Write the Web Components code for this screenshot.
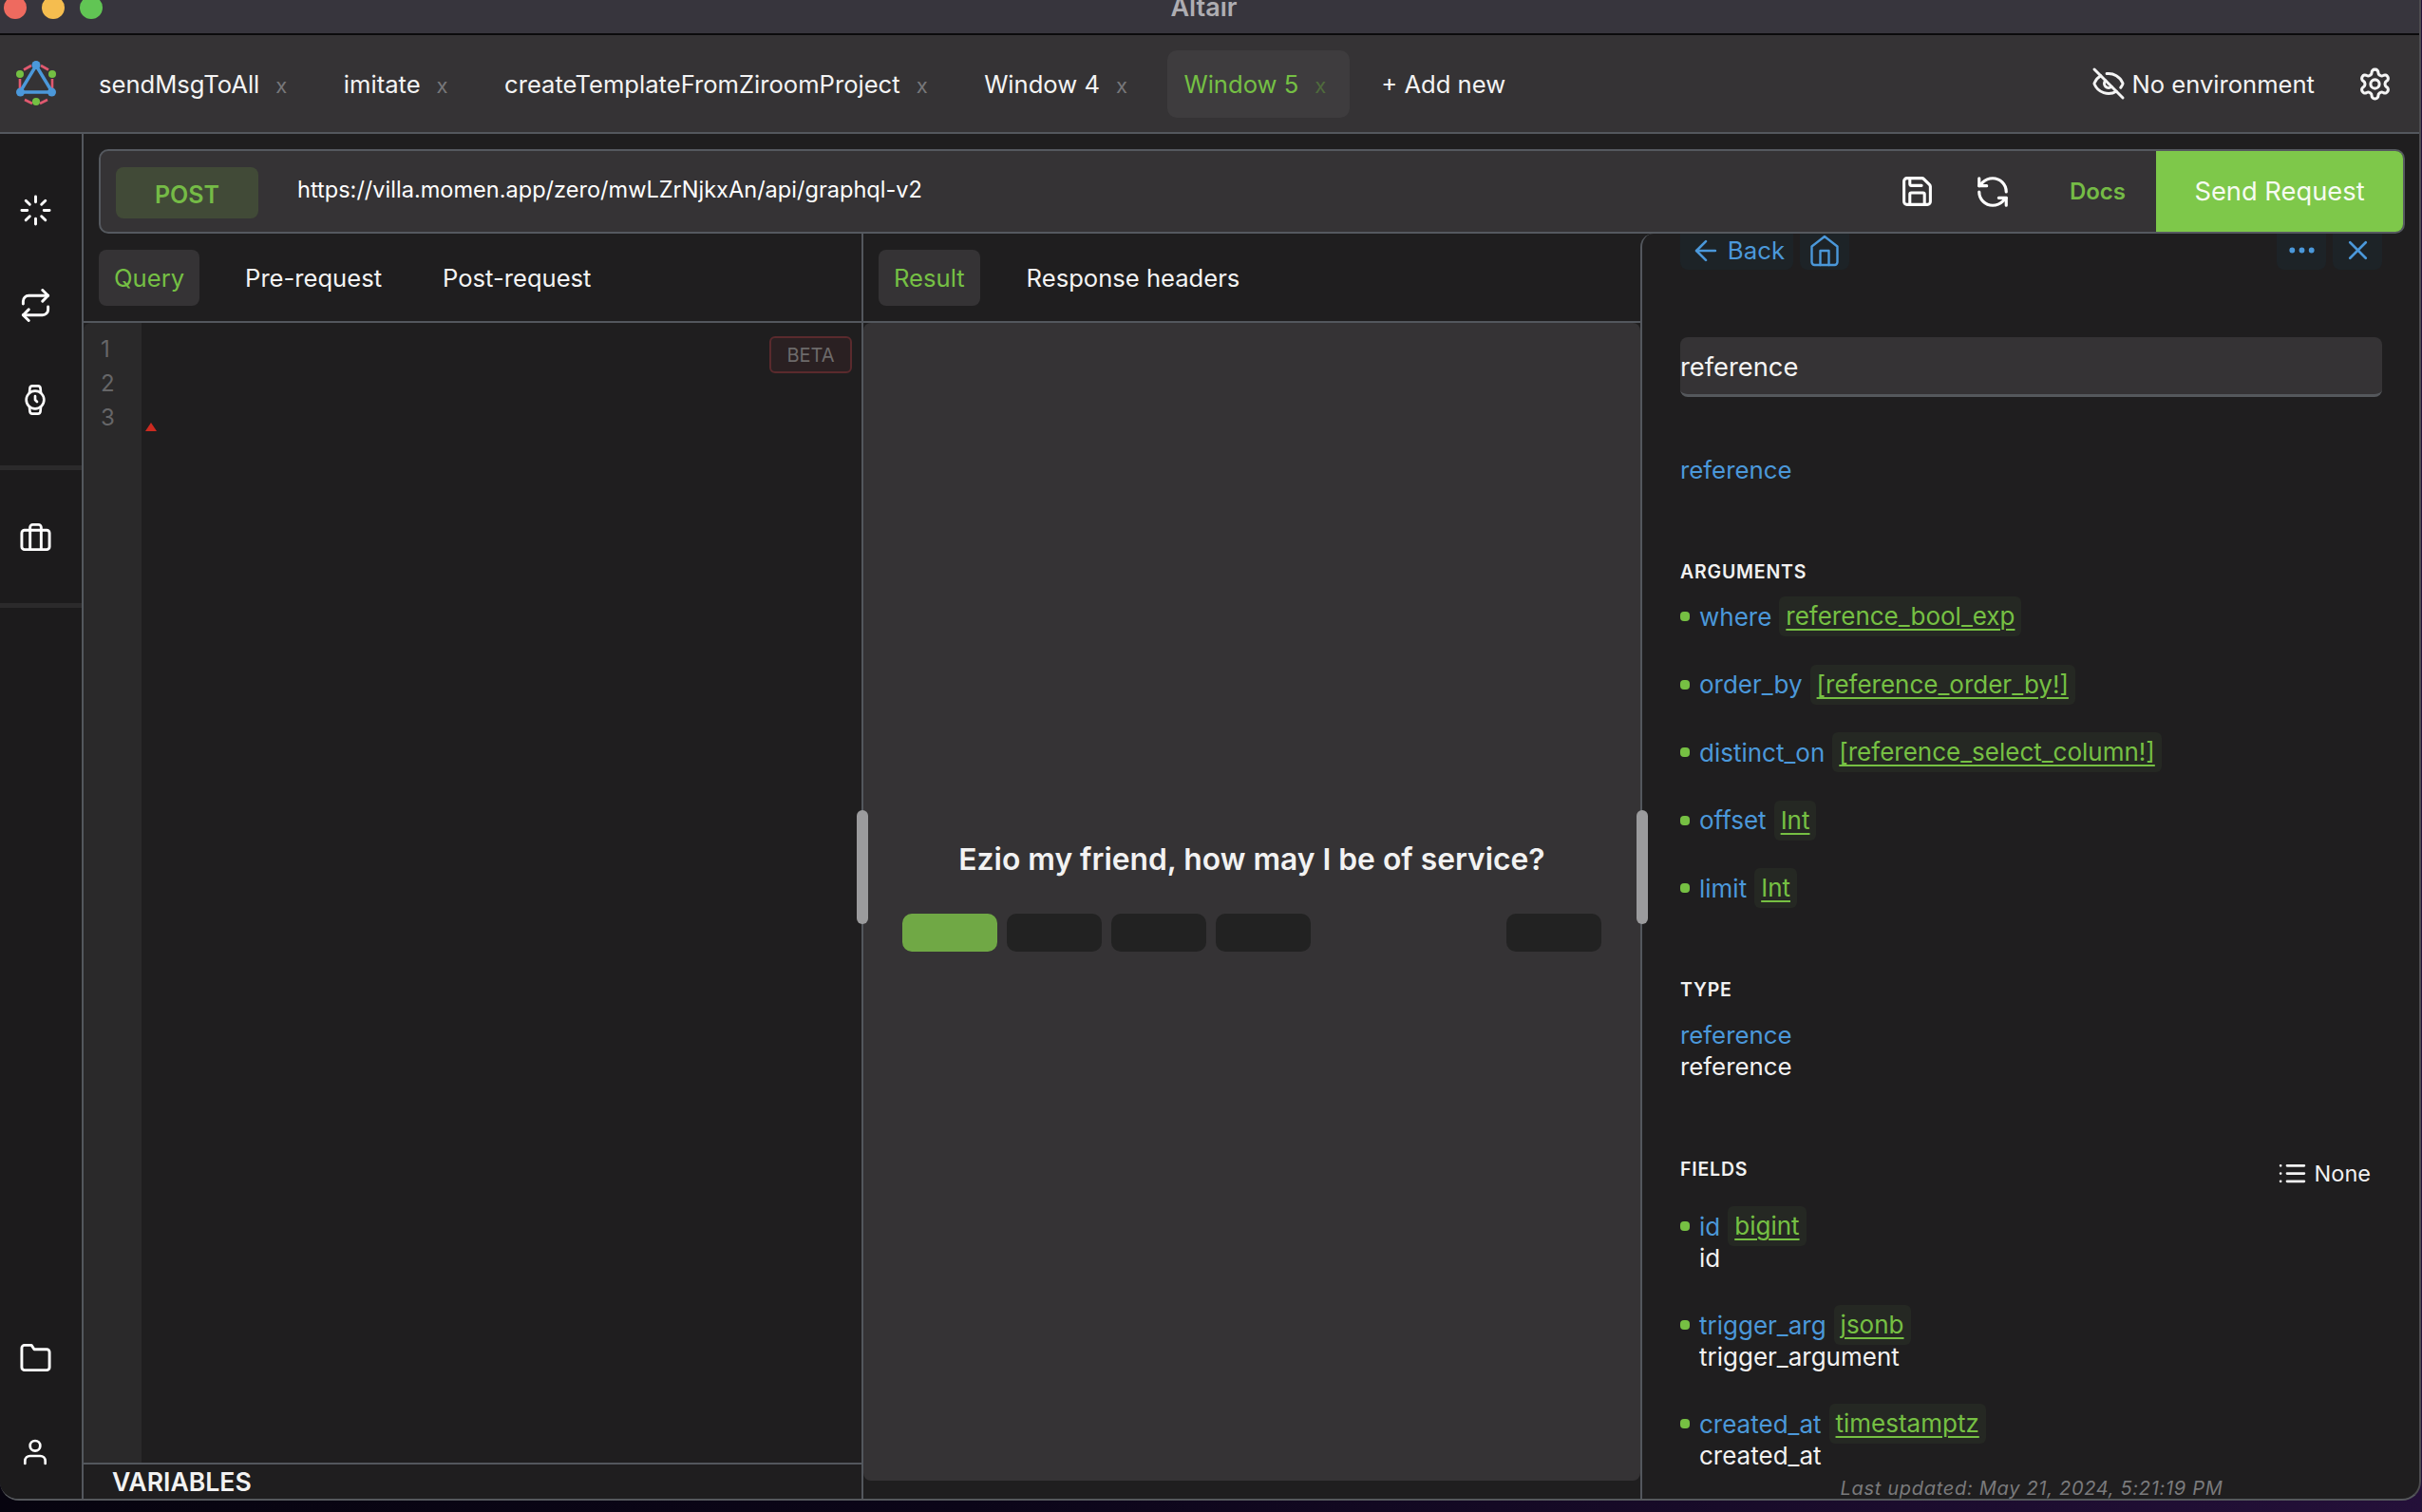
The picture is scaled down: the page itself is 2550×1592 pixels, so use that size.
<!DOCTYPE html>
<html lang="en">
<head>
<meta charset="utf-8">
<title>Altair</title>
<style>
  html, body { margin: 0; height: 100%; overflow: hidden; }
  body {
    background: linear-gradient(90deg, #07040f, #0b0518 40%, #241039);
    font-family: Inter, "Noto Sans", sans-serif;
    color: #f2f2f2;
  }
</style>
</head>
<body>
<app-window>
  <title-bar slot="top">Altair</title-bar>
  <tab-bar slot="top"></tab-bar>
  <side-bar slot="side"></side-bar>
  <url-bar slot="main"></url-bar>
  <panel-row slot="main">
    <query-panel></query-panel>
    <result-panel></result-panel>
    <docs-panel></docs-panel>
  </panel-row>
</app-window>

<script>
const ICONS = {
  loader: '<path d="M12 2v4M12 18v4M4.93 4.93l2.83 2.83M16.24 16.24l2.83 2.83M2 12h4M18 12h4M4.93 19.07l2.83-2.83M16.24 7.76l2.83-2.83"/>',
  repeat: '<path d="M17 1l4 4-4 4"/><path d="M3 11V9a4 4 0 0 1 4-4h14"/><path d="M7 23l-4-4 4-4"/><path d="M21 13v2a4 4 0 0 1-4 4H3"/>',
  watch: '<circle cx="12" cy="12" r="7"/><path d="M12 9v3l1.5 1.5"/><path d="M16.51 17.35l-.35 3.83a2 2 0 0 1-2 1.82H9.83a2 2 0 0 1-2-1.82l-.35-3.83m.01-10.7l.35-3.83A2 2 0 0 1 9.83 1h4.35a2 2 0 0 1 2 1.82l.35 3.83"/>',
  briefcase: '<rect x="2" y="7" width="20" height="14" rx="2"/><path d="M16 21V5a2 2 0 0 0-2-2h-4a2 2 0 0 0-2 2v16"/>',
  folder: '<path d="M22 19a2 2 0 0 1-2 2H4a2 2 0 0 1-2-2V5a2 2 0 0 1 2-2h5l2 3h9a2 2 0 0 1 2 2z"/>',
  user: '<path d="M20 21v-2a4 4 0 0 0-4-4H8a4 4 0 0 0-4 4v2"/><circle cx="12" cy="7" r="4"/>',
  save: '<path d="M15.2 3a2 2 0 0 1 1.4.6l3.8 3.8a2 2 0 0 1 .6 1.4V19a2 2 0 0 1-2 2H5a2 2 0 0 1-2-2V5a2 2 0 0 1 2-2z"/><path d="M17 21v-7a1 1 0 0 0-1-1H8a1 1 0 0 0-1 1v7"/><path d="M7 3v4a1 1 0 0 0 1 1h7"/>',
  refresh: '<path d="M21 12a9 9 0 0 0-9-9 9.75 9.75 0 0 0-6.74 2.74L3 8"/><path d="M3 3v5h5"/><path d="M3 12a9 9 0 0 0 9 9 9.75 9.75 0 0 0 6.74-2.74L21 16"/><path d="M16 16h5v5"/>',
  eyeoff: '<path d="M10.733 5.076a10.744 10.744 0 0 1 11.205 6.575 1 1 0 0 1 0 .696 10.747 10.747 0 0 1-1.444 2.49"/><path d="M14.084 14.158a3 3 0 0 1-4.242-4.242"/><path d="M17.479 17.499a10.75 10.75 0 0 1-15.417-5.151 1 1 0 0 1 0-.696 10.75 10.75 0 0 1 4.446-5.143"/><path d="M2 2l20 20"/>',
  gear: '<path d="M12.22 2h-.44a2 2 0 0 0-2 2v.18a2 2 0 0 1-1 1.73l-.43.25a2 2 0 0 1-2 0l-.15-.08a2 2 0 0 0-2.73.73l-.22.38a2 2 0 0 0 .73 2.73l.15.1a2 2 0 0 1 1 1.72v.51a2 2 0 0 1-1 1.74l-.15.09a2 2 0 0 0-.73 2.73l.22.38a2 2 0 0 0 2.73.73l.15-.08a2 2 0 0 1 2 0l.43.25a2 2 0 0 1 1 1.73V20a2 2 0 0 0 2 2h.44a2 2 0 0 0 2-2v-.18a2 2 0 0 1 1-1.73l.43-.25a2 2 0 0 1 2 0l.15.08a2 2 0 0 0 2.73-.73l.22-.39a2 2 0 0 0-.73-2.73l-.15-.08a2 2 0 0 1-1-1.74v-.5a2 2 0 0 1 1-1.74l.15-.09a2 2 0 0 0 .73-2.73l-.22-.38a2 2 0 0 0-2.73-.73l-.15.08a2 2 0 0 1-2 0l-.43-.25a2 2 0 0 1-1-1.73V4a2 2 0 0 0-2-2z"/><circle cx="12" cy="12" r="3"/>',
  back: '<path d="M19 12H5"/><path d="M12 19l-7-7 7-7"/>',
  home: '<path d="M3 9l9-7 9 7v11a2 2 0 0 1-2 2H5a2 2 0 0 1-2-2z"/><path d="M9 22V12h6v10"/>',
  more: '<circle cx="5" cy="12" r="1"/><circle cx="12" cy="12" r="1"/><circle cx="19" cy="12" r="1"/>',
  close: '<path d="M18 6L6 18"/><path d="M6 6l12 12"/>',
  list: '<path d="M8 6h13M8 12h13M8 18h13M3 6h.01M3 12h.01M3 18h.01"/>'
};

class UiIcon extends HTMLElement {
  connectedCallback() {
    const size = this.getAttribute("size") || 35;
    const stroke = this.getAttribute("stroke") || 2;
    this.attachShadow({ mode: "open" });
    this.shadowRoot.innerHTML = `
      <style>:host { display: inline-flex; flex: none; color: inherit; } svg { display: block; }</style>
      <svg width="${size}" height="${size}" viewBox="0 0 24 24" fill="none" stroke="currentColor"
        stroke-width="${stroke}" stroke-linecap="round" stroke-linejoin="round">${ICONS[this.getAttribute("name")]}</svg>`;
  }
}
customElements.define("ui-icon", UiIcon);

// small helper, each element only differs by its template
function component(tag, html) {
  const template = document.createElement("template");
  template.innerHTML = html;
  customElements.define(tag, class extends HTMLElement {
    constructor() {
      super();
      this.attachShadow({ mode: "open" });
      this.shadowRoot.appendChild(template.content.cloneNode(true));
    }
  });
}

component("app-window", `
<style>
  :host { display: flex; flex-direction: column; width: 2549px; height: 1580px; background: #1f1e1f;
    border-radius: 0 0 20px 20px; overflow: hidden; box-sizing: border-box;
    border-right: 2px solid #4c4c4e; border-bottom: 2px solid #55585c; }
  .body { flex: 1; min-height: 0; display: flex; }
  .main { flex: 1; min-width: 0; display: flex; flex-direction: column; }
</style>
<slot name="top"></slot>
<div class="body">
  <slot name="side"></slot>
  <div class="main"><slot name="main"></slot></div>
</div>`);

component("title-bar", `
<style>
  :host { display: grid; grid-template-columns: 1fr auto 1fr; height: 37px; box-sizing: border-box; background: #37353d;
    border-bottom: 2px solid #0b0b0c; overflow: hidden; padding-right: 12px; }
  .lights { display: flex; gap: 16px; padding-left: 4px; align-items: flex-end; height: 20px; }
  .lights i { display: block; flex: none; width: 24px; height: 24px; border-radius: 50%; }
  .title { font: 600 27px/26px Inter, sans-serif; color: #aeadb2; margin-top: -5px; }
</style>
<div class="lights"><i style="background:#ee6a5f"></i><i style="background:#f5bd4f"></i><i style="background:#61c554"></i></div>
<div class="title"><slot></slot></div>`);

component("tab-item", `
<style>
  :host { display: flex; align-items: center; gap: 17px; height: 71px; padding: 0 25px 0 17px; border-radius: 10px;
    font-size: 25.6px; color: #f4f4f4; white-space: nowrap; }
  :host([active]) { background: #3e3c3e; color: #75c044; }
  .x { font-size: 22px; color: #77777a; position: relative; top: 2px; }
  :host([active]) .x { color: #4f6b3c; }
</style>
<slot></slot><span class="x">x</span>`);

component("tab-bar", `
<style>
  :host { display: flex; align-items: center; height: 104px; box-sizing: border-box; background: #353335;
    border-bottom: 2px solid #53575d; padding: 0 28px 0 17px; }
  .logo { flex: none; margin-right: 28px; display: block; }
  .tabs { display: flex; gap: 17.5px; }
  .add { font-size: 25.6px; padding-left: 33px; color: #f4f4f4; line-height: 71px; }
  .right { margin-left: auto; display: flex; align-items: center; font-size: 25.6px; color: #f4f4f4; }
  .env { margin-left: 6px; margin-right: 45px; }
</style>
<svg class="logo" width="42" height="48" viewBox="0 0 42 48" fill="none">
  <g stroke="#e0596f" stroke-width="2.6">
    <path d="M8 9.5L16 5M26 5l8 4.5M38 19v14M33 41l-8 4M17 45l-8-4M4 33V19"/>
  </g>
  <path d="M21 5L4 33h34z" stroke="#4b98da" stroke-width="3.4" stroke-linejoin="round"/>
  <g fill="#4b98da"><circle cx="21" cy="4.5" r="4.5"/><circle cx="4.5" cy="33" r="4.5"/><circle cx="37.5" cy="33" r="4.5"/></g>
  <g fill="#74c043"><circle cx="4" cy="14" r="4"/><circle cx="38" cy="14" r="4"/><circle cx="21" cy="43" r="4"/></g>
</svg>
<div class="tabs">
  <tab-item>sendMsgToAll</tab-item>
  <tab-item>imitate</tab-item>
  <tab-item>createTemplateFromZiroomProject</tab-item>
  <tab-item>Window 4</tab-item>
  <tab-item active>Window 5</tab-item>
</div>
<div class="add">+ Add new</div>
<div class="right">
  <ui-icon name="eyeoff" size="36"></ui-icon><span class="env">No environment</span><ui-icon name="gear" size="37"></ui-icon>
</div>`);

component("side-bar", `
<style>
  :host { display: flex; flex-direction: column; flex: none; width: 88px; box-sizing: border-box; background: #1c1b1c;
    border-right: 2px solid #53575d; padding-top: 30px; color: #fff; }
  .item { height: 100px; box-sizing: border-box; padding-right: 12px; display: flex; align-items: center; justify-content: center; }
  .sep { height: 5px; background: #2b2a2b; margin: 19px 0 20px; }
  .sep + .item + .sep { margin-top: 20px; }
  .bottom { margin-top: auto; }
  .bottom .item { padding-top: 2px; }
</style>
<div class="item"><ui-icon name="loader"></ui-icon></div>
<div class="item"><ui-icon name="repeat"></ui-icon></div>
<div class="item"><ui-icon name="watch" size="32"></ui-icon></div>
<div class="sep"></div>
<div class="item"><ui-icon name="briefcase"></ui-icon></div>
<div class="sep"></div>
<div class="bottom">
  <div class="item"><ui-icon name="folder"></ui-icon></div>
  <div class="item"><ui-icon name="user" size="32"></ui-icon></div>
</div>`);

component("url-bar", `
<style>
  :host { display: flex; align-items: stretch; flex: none; height: 89px; box-sizing: border-box; margin: 16px 15px 0 16px;
    background: #353335; border: 2px solid #55595f; border-radius: 10px; overflow: hidden; padding-left: 16px; color: #fff; }
  .method { align-self: center; width: 150px; height: 54px; margin-top: 3px; border-radius: 8px; background: #414a37; color: #75bb46;
    font-weight: 600; font-size: 25px; padding-top: 4px; box-sizing: border-box; display: flex; align-items: center; justify-content: center; }
  .url { align-self: center; margin-left: 41px; font-size: 23.55px; margin-top: -4px; flex: 1; }
  .tools { display: flex; align-items: center; gap: 42px; margin-right: 62px; }
  .docs { align-self: center; color: #75bb46; font-weight: 600; font-size: 24px; margin-right: 32px; }
  .send { width: 260px; background: #7ec84a; color: #f6fbf1; font-size: 27.3px; display: flex; align-items: center; justify-content: center; }
</style>
<div class="method">POST</div>
<div class="url">https://villa.momen.app/zero/mwLZrNjkxAn/api/graphql-v2</div>
<div class="tools"><ui-icon name="save" size="37"></ui-icon><ui-icon name="refresh" size="38"></ui-icon></div>
<div class="docs">Docs</div>
<div class="send">Send Request</div>`);

component("panel-row", `
<style>
  :host { display: grid; grid-template-columns: 819px 820px 1fr; flex: 1; min-height: 0; }
</style>
<slot></slot>`);

component("sub-tabs", `
<style>
  :host { display: flex; gap: 33px; flex: none; height: 94px; box-sizing: border-box; padding: 17px 16px 16px;
    border-bottom: 2px solid #53575d; }
</style>
<slot></slot>`);

component("sub-tab", `
<style>
  :host { display: flex; align-items: center; height: 59px; padding: 0 16px; border-radius: 8px; font-size: 25.6px; color: #f4f4f4; }
  :host([active]) { background: #353335; color: #75c044; }
</style>
<slot></slot>`);

component("drag-handle", `
<style>
  :host { position: absolute; left: -7px; top: 50%; width: 12px; height: 120px; margin-top: -59px; border-radius: 6px;
    background: #9b9b9d; z-index: 2; }
</style>`);

component("query-panel", `
<style>
  :host { display: flex; flex-direction: column; min-height: 0; }
  .editor { flex: 1; min-height: 0; display: flex; position: relative; }
  .gutter { width: 61px; flex: none; box-sizing: border-box; background: #2a292a; padding: 10px 0 0 18px; border-radius: 8px 0 0 0;
    font-size: 24px; line-height: 36px; color: #666668; }
  .code { flex: 1; padding: 105px 0 0 4px; }
  .marker { width: 0; height: 0; border: solid transparent; border-width: 0 6px 9px; border-bottom-color: #cc2a20; }
  .beta { position: absolute; top: 14px; right: 10px; width: 87px; height: 39px; box-sizing: border-box; border: 2px solid #5a2a2d;
    border-radius: 6px; background: #2a2022; color: #6d6a6a; font-size: 20px; display: flex; align-items: center; justify-content: center; }
  .vars { flex: none; height: 38px; box-sizing: border-box; border-top: 2px solid #53575d; padding-left: 30px;
    font-weight: 600; font-size: 26.6px; line-height: 36px; color: #f2f2f2; }
</style>
<sub-tabs style="gap:32px"><sub-tab active>Query</sub-tab><sub-tab>Pre-request</sub-tab><sub-tab>Post-request</sub-tab></sub-tabs>
<div class="editor">
  <div class="gutter">1<br>2<br>3</div>
  <div class="code"><div class="marker"></div></div>
  <div class="beta">BETA</div>
</div>
<div class="vars">VARIABLES</div>`);

component("result-panel", `
<style>
  :host { display: flex; flex-direction: column; min-height: 0; position: relative; border-left: 2px solid #53575d; }
  .body { flex: 1; min-height: 0; margin-bottom: 19px; background: #353335; border-radius: 8px; display: flex; flex-direction: column;
    justify-content: center; padding: 0 41px 18px; }
  h2 { margin: 0 0 31px; font-size: 31.8px; font-weight: 600; text-align: center; line-height: 52px; color: #f2f2f2; }
  .btns { display: flex; gap: 10px; }
  .btns i { display: block; width: 100px; height: 40px; border-radius: 10px; background: #222222; }
  .btns i:first-child { background: #70a845; }
  .btns i:last-child { margin-left: auto; }
</style>
<drag-handle></drag-handle>
<sub-tabs><sub-tab active>Result</sub-tab><sub-tab>Response headers</sub-tab></sub-tabs>
<div class="body">
  <h2>Ezio my friend, how may I be of service?</h2>
  <div class="btns"><i></i><i></i><i></i><i></i><i></i></div>
</div>`);

class DocRow extends HTMLElement {
  connectedCallback() {
    const desc = this.getAttribute("desc");
    this.attachShadow({ mode: "open" });
    this.shadowRoot.innerHTML = `
    <style>
      :host { display: block; font-size: 26px; line-height: 33px; }
      .head { display: flex; align-items: center; height: 42px; }
      .dot { width: 10px; height: 10px; border-radius: 4px; background: #76c043; margin-right: 10px; flex: none; }
      .name { color: #4b98da; margin-right: 8px; }
      .type { height: 42px; line-height: 42px; padding: 0 7px; border-radius: 6px; background: #252823; color: #76c043;
        text-decoration: underline; text-underline-offset: 4px; text-decoration-thickness: 2px; }
      .desc { padding-left: 20px; margin-top: -4px; color: #f2f2f2; }
    </style>
    <div class="head"><span class="dot"></span><span class="name">${this.getAttribute("name")}</span><span class="type">${this.getAttribute("type")}</span></div>
    ${desc ? `<div class="desc">${desc}</div>` : ""}`;
  }
}
customElements.define("doc-row", DocRow);

component("docs-panel", `
<style>
  :host { display: flex; flex-direction: column; min-height: 0; position: relative; border-left: 2px solid #53575d;
    border-radius: 14px 0 0 0; font-size: 25.8px; line-height: 33px; }
  .scroll { flex: 1; min-height: 0; overflow: hidden; padding: 0 39px 0 40px; }
  .nav { display: flex; gap: 7px; color: #4b98da; height: 38px; }
  .btn { display: flex; align-items: center; justify-content: center; height: 38px; padding-bottom: 3px; box-sizing: border-box; width: 52px; background: #1d2327; border-radius: 0 0 8px 8px; overflow: hidden; }
  .btn.back { width: 119px; gap: 6px; font-size: 25.8px; padding-left: 1px; }
  .spacer { flex: 1; }
  .search { margin-top: 71px; height: 63px; box-sizing: border-box; background: #353335; border-bottom: 3px solid #55585c; border-radius: 8px;
    font-size: 27.3px; line-height: 63px; color: #f4f4f4; }
  .blue { color: #4b98da; }
  .white { color: #f2f2f2; }
  .t { font-weight: 600; font-size: 19.5px; line-height: 24px; letter-spacing: .8px; color: #f2f2f2; }
  .args { display: flex; flex-direction: column; gap: 29.5px; margin-top: 14px; }
  .fields { display: flex; flex-direction: column; gap: 33px; margin-top: 18px; }
  .fhead { display: flex; justify-content: space-between; align-items: flex-start; margin-top: 80px; height: 33px; }
  .none { display: flex; align-items: center; gap: 7px; font-size: 23.5px; color: #f2f2f2; margin-right: 12px; }
  .foot { flex: none; height: 22px; line-height: 22px; padding-left: 2px; text-align: center; font-style: italic; font-size: 20px; color: #7a7a7c; letter-spacing: .7px; }
</style>
<drag-handle style="left:-6px"></drag-handle>
<div class="scroll">
  <div class="nav">
    <div class="btn back"><ui-icon name="back" size="34" stroke="1.8"></ui-icon>Back</div>
    <div class="btn"><ui-icon name="home" size="36" stroke="1.6"></ui-icon></div>
    <div class="spacer"></div>
    <div class="btn"><ui-icon name="more" size="35" stroke="2"></ui-icon></div>
    <div class="btn"><ui-icon name="close" size="33" stroke="1.9"></ui-icon></div>
  </div>
  <div class="search">reference</div>
  <div class="blue" style="margin-top:60px">reference</div>
  <div class="t" style="margin-top:79px">ARGUMENTS</div>
  <div class="args">
    <doc-row name="where" type="reference_bool_exp"></doc-row>
    <doc-row name="order_by" type="[reference_order_by!]"></doc-row>
    <doc-row name="distinct_on" type="[reference_select_column!]"></doc-row>
    <doc-row name="offset" type="Int"></doc-row>
    <doc-row name="limit" type="Int"></doc-row>
  </div>
  <div class="t" style="margin-top:74px">TYPE</div>
  <div class="blue" style="margin-top:19px">reference</div>
  <div class="white">reference</div>
  <div class="fhead"><span class="t">FIELDS</span><span class="none"><ui-icon name="list" size="33"></ui-icon>None</span></div>
  <div class="fields">
    <doc-row name="id" type="bigint" desc="id"></doc-row>
    <doc-row name="trigger_arg" type="jsonb" desc="trigger_argument"></doc-row>
    <doc-row name="created_at" type="timestamptz" desc="created_at"></doc-row>
  </div>
</div>
<div class="foot">Last updated: May 21, 2024, 5:21:19 PM</div>`);
</script>
</body>
</html>
